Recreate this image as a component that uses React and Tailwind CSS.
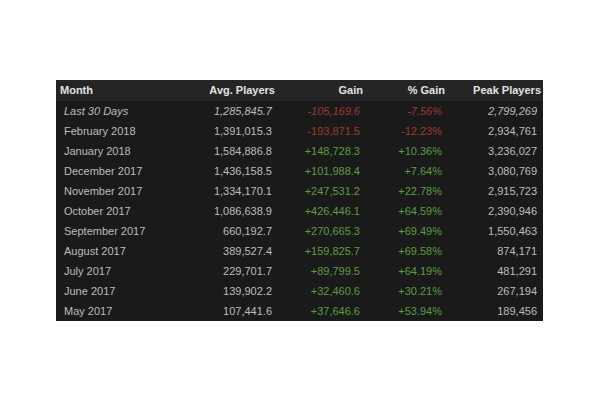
import React from "react";

const rows = [
  ["Last 30 Days", "1,285,845.7", "-105,169.6", "-7.56%", "2,799,269", true],
  ["February 2018", "1,391,015.3", "-193,871.5", "-12.23%", "2,934,761"],
  ["January 2018", "1,584,886.8", "+148,728.3", "+10.36%", "3,236,027"],
  ["December 2017", "1,436,158.5", "+101,988.4", "+7.64%", "3,080,769"],
  ["November 2017", "1,334,170.1", "+247,531.2", "+22.78%", "2,915,723"],
  ["October 2017", "1,086,638.9", "+426,446.1", "+64.59%", "2,390,946"],
  ["September 2017", "660,192.7", "+270,665.3", "+69.49%", "1,550,463"],
  ["August 2017", "389,527.4", "+159,825.7", "+69.58%", "874,171"],
  ["July 2017", "229,701.7", "+89,799.5", "+64.19%", "481,291"],
  ["June 2017", "139,902.2", "+32,460.6", "+30.21%", "267,194"],
  ["May 2017", "107,441.6", "+37,646.6", "+53.94%", "189,456"],
];

export default function App() {
  return (
    <div className="w-[600px] h-[400px] bg-white pt-[80px] pl-[56px] font-['Liberation_Sans',Arial,sans-serif] text-[11px]">
      <table className="w-[487px] table-fixed border-collapse bg-[#1a1a1a]">
        <colgroup>
          <col className="w-[130px]" />
          <col className="w-[91px]" />
          <col className="w-[88px]" />
          <col className="w-[82px]" />
          <col className="w-[96px]" />
        </colgroup>
        <thead>
          <tr className="h-[21px] bg-[#252525] text-[#e2e2e2] font-bold">
            <th className="text-left pl-[4px]">Month</th>
            <th className="text-right pr-[2px]">Avg. Players</th>
            <th className="text-right pr-[2px]">Gain</th>
            <th className="text-right pr-[2px]">% Gain</th>
            <th className="text-right pr-[2px]">Peak Players</th>
          </tr>
        </thead>
        <tbody>
          {rows.map(([month, avg, gain, pct, peak, current]) => {
            const down = gain.startsWith("-");
            const tone = down ? "text-[#9c3a2e]" : "text-[#5e9c42]";
            return (
              <tr key={month} className={`h-[20px] text-[#bdbdbd] ${current ? "italic" : ""}`}>
                <td className="text-left pl-[8px]">{month}</td>
                <td className="text-right pr-[5px]">{avg}</td>
                <td className={`text-right pr-[5px] ${tone}`}>{gain}</td>
                <td className={`text-right pr-[5px] ${tone}`}>{pct}</td>
                <td className="text-right pr-[6px]">{peak}</td>
              </tr>
            );
          })}
        </tbody>
      </table>
    </div>
  );
}
